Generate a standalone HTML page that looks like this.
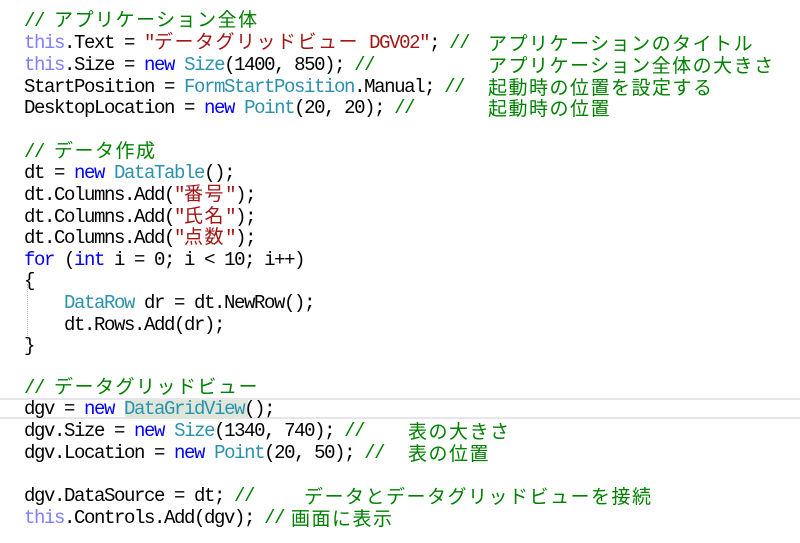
<!DOCTYPE html>
<html><head><meta charset="utf-8"><style>
body{margin:0;width:800px;height:543px;background:#fff;overflow:hidden;position:relative;font-family:"Liberation Mono","Noto Sans CJK JP",monospace;font-size:19px;letter-spacing:-1.4px;color:#000}
.l{position:absolute;left:24px;height:22px;line-height:22px;white-space:pre}
.j{font-family:"Noto Sans CJK JP",sans-serif;font-size:19px;letter-spacing:1.5px;line-height:0}
.c{color:#008000}.s{color:#a31515}.k{color:#0000ff}.t{color:#2b91af}.h{color:#7f7fff}
.a{position:absolute;white-space:pre;height:22px;line-height:22px}
</style></head><body>
<div style="position:absolute;left:0;top:398px;width:800px;height:21px;border-top:2px solid #e6e6ea;border-bottom:2px solid #e6e6ea;box-sizing:border-box"></div>
<div style="position:absolute;left:125px;top:400px;width:123px;height:19px;background:#dfe7da"></div>
<div style="position:absolute;left:27px;top:284px;height:56px;border-left:1px dotted #bbb"></div>

<div class="l c" style="top:10px">// <span class="j">アプリケーション全体</span></div>
<div class="l" style="top:32px"><span class="h">this</span>.Text = <span class="s">"<span class="j">データグリッドビュー</span> DGV02"</span>; <span class="c">//</span></div>
<div class="a c j" style="left:488px;top:32px;line-height:22px">アプリケーションのタイトル</div>
<div class="l" style="top:54px"><span class="h">this</span>.Size = <span class="k">new</span> <span class="t">Size</span>(1400, 850); <span class="c">//</span></div>
<div class="a c j" style="left:488px;top:54px;line-height:22px">アプリケーション全体の大きさ</div>
<div class="l" style="top:76px">StartPosition = <span class="t">FormStartPosition</span>.Manual; <span class="c">//</span></div>
<div class="a c j" style="left:488px;top:76px;line-height:22px">起動時の位置を設定する</div>
<div class="l" style="top:97px">DesktopLocation = <span class="k">new</span> <span class="t">Point</span>(20, 20); <span class="c">//</span></div>
<div class="a c j" style="left:488px;top:97px;line-height:22px">起動時の位置</div>

<div class="l c" style="top:141px">// <span class="j">データ作成</span></div>
<div class="l" style="top:162px">dt = <span class="k">new</span> <span class="t">DataTable</span>();</div>
<div class="l" style="top:184px">dt.Columns.Add(<span class="s">"<span class="j">番号</span>"</span>);</div>
<div class="l" style="top:206px">dt.Columns.Add(<span class="s">"<span class="j">氏名</span>"</span>);</div>
<div class="l" style="top:227px">dt.Columns.Add(<span class="s">"<span class="j">点数</span>"</span>);</div>
<div class="l" style="top:249px"><span class="k">for</span> (<span class="k">int</span> i = 0; i &lt; 10; i++)</div>
<div class="l" style="top:270px">{</div>
<div class="l" style="top:292px">    <span class="t">DataRow</span> dr = dt.NewRow();</div>
<div class="l" style="top:314px">    dt.Rows.Add(dr);</div>
<div class="l" style="top:335px">}</div>

<div class="l c" style="top:377px">// <span class="j">データグリッドビュー</span></div>
<div class="l" style="top:398px">dgv = <span class="k">new</span> <span class="t">DataGridView</span>();</div>
<div class="l" style="top:420px">dgv.Size = <span class="k">new</span> <span class="t">Size</span>(1340, 740); <span class="c">//</span></div>
<div class="a c j" style="left:408px;top:420px;line-height:22px">表の大きさ</div>
<div class="l" style="top:442px">dgv.Location = <span class="k">new</span> <span class="t">Point</span>(20, 50); <span class="c">//</span></div>
<div class="a c j" style="left:408px;top:442px;line-height:22px">表の位置</div>

<div class="l" style="top:485px">dgv.DataSource = dt; <span class="c">//</span></div>
<div class="a c j" style="left:304px;top:485px;line-height:22px">データとデータグリッドビューを接続</div>
<div class="l" style="top:507px"><span class="h">this</span>.Controls.Add(dgv); <span class="c">//</span></div>
<div class="a c j" style="left:291px;top:507px;line-height:22px">画面に表示</div>
</body></html>
